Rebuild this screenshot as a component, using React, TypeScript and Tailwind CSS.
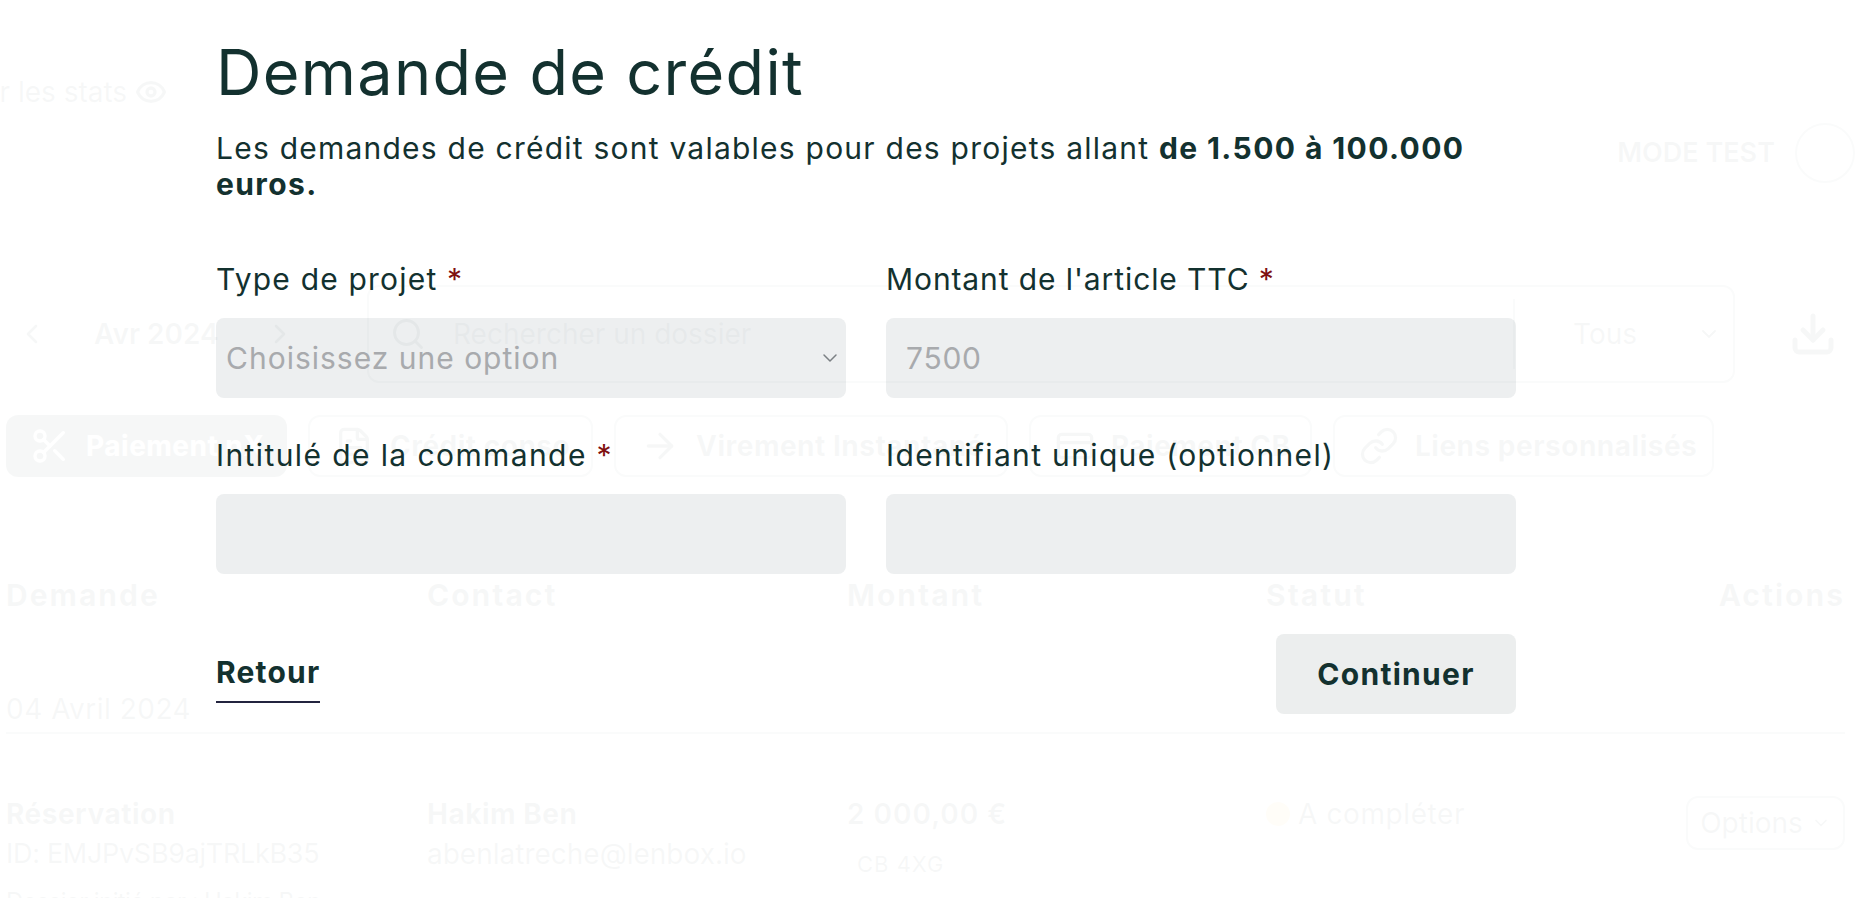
import React from 'react';
import { ArrowRight, ChevronDown, ChevronLeft, ChevronRight, CreditCard, Download, Eye, FileText, Link, Scissors, Search } from 'lucide-react';

const font = { fontFamily: '"Inter", "Liberation Sans", sans-serif' };

const tabs = [
  { label: 'Paiement nX', icon: Scissors, width: 'w-[281px]', active: true },
  { label: 'Crédit conso', icon: FileText, width: 'w-[285px]', active: false },
  { label: 'Virement Instantané', icon: ArrowRight, width: 'w-[394px]', active: false },
  { label: 'Paiement CB', icon: CreditCard, width: 'w-[283px]', active: false },
  { label: 'Liens personnalisés', icon: Link, width: 'w-[381px]', active: false },
];

const Required = () => <span className="text-[#7f1010]"> *</span>;

const Backdrop: React.FC = () => (
  <div className="w-[1872px] h-[898px] overflow-hidden pl-[6px] pr-[27px] text-[#13312f] text-[28px] leading-[40px]">
    <div className="flex justify-between h-[285px] pt-[72px]">
      <div className="flex items-center gap-2 h-[40px] -ml-[48px]">
        <span>Voir les stats</span>
        <Eye className="w-8 h-8" strokeWidth={2.5} />
      </div>
      <div className="flex items-center gap-5 h-[60px] mt-[51px] -mr-[10px]">
        <span className="font-semibold text-[27px]">MODE TEST</span>
        <div className="w-[60px] h-[60px] rounded-full border-2 border-[#13312f]/60" />
      </div>
    </div>

    <div className="flex items-center h-[98px]">
      <ChevronLeft className="w-8 h-8 ml-[10px]" />
      <span className="ml-[46px] w-[176px] font-semibold whitespace-nowrap">Avr 2024</span>
      <ChevronRight className="w-8 h-8 -ml-[6px]" />
      <div className="ml-[71px] w-[1368px] h-[98px] flex items-center border-2 border-[#13312f]/60 rounded-xl">
        <Search className="w-9 h-9 ml-[21px]" />
        <span className="ml-[27px] w-[1060px] text-[#4b5563] whitespace-nowrap">Rechercher un dossier</span>
        <div className="h-[70px] border-l-2 border-[#13312f]/60 flex items-center flex-1 pl-[58px] gap-[60px]">
          <span>Tous</span>
          <ChevronDown className="w-6 h-6" />
        </div>
      </div>
      <Download className="w-12 h-12 ml-[54px]" strokeWidth={2.5} />
    </div>

    <div className="flex gap-[21px] mt-[32px]">
      {tabs.map(t => (
        <div key={t.label} className={`${t.width} h-[62px] rounded-xl flex items-center gap-4 pl-[24px] font-bold tracking-[0.5px] ${t.active ? 'bg-[#13312f] text-white' : 'border-2 border-[#13312f]/60'}`}>
          <t.icon className="w-10 h-10 shrink-0" />
          <span className="whitespace-nowrap">{t.label}</span>
        </div>
      ))}
    </div>

    <div className="grid grid-cols-[421px_420px_419px_1fr] font-bold text-[30px] tracking-[2px] mt-[98px] h-[40px] items-center">
      <span>Demande</span>
      <span>Contact</span>
      <span>Montant</span>
      <div className="flex justify-between"><span>Statut</span><span>Actions</span></div>
    </div>

    <div className="mt-[74px] h-[45px] border-b-2 border-[#13312f]/60 tracking-[0.5px]">04 Avril 2024</div>

    <div className="grid grid-cols-[421px_420px_419px_1fr] mt-[60px]">
      <div className="flex flex-col">
        <span className="font-bold tracking-[0.5px]">Réservation</span>
        <span className="text-[27px] tracking-[-0.3px]">ID: EMJPvSB9ajTRLkB35</span>
        <span className="text-[24px] tracking-[-0.6px] mt-[8px] whitespace-nowrap">Dossier initié par : Hakim Ben</span>
      </div>
      <div className="flex flex-col">
        <span className="font-bold tracking-[0.5px]">Hakim Ben</span>
        <span>abenlatreche@lenbox.io</span>
      </div>
      <div className="flex flex-col">
        <span className="font-semibold tracking-[1px]">2 000,00 €</span>
        <span className="text-[22px] tracking-[1px] ml-[10px] mt-[10px]">CB 4XG</span>
      </div>
      <div className="flex justify-between">
        <div className="flex items-center gap-2 h-[40px] tracking-[0.6px]">
          <span className="w-6 h-6 rounded-full bg-[#f5b83d]" />
          <span>A compléter</span>
        </div>
        <div className="w-[159px] h-[54px] rounded-xl border-2 border-[#13312f]/60 flex items-center justify-center gap-2 mt-[2px]">
          <span>Options</span>
          <ChevronDown className="w-5 h-5" />
        </div>
      </div>
    </div>
  </div>
);

const App: React.FC = () => {
  return (
    <div className="relative w-[1872px] h-[898px] overflow-hidden bg-white" style={font}>
      <Backdrop />

      <div className="absolute inset-0 bg-white/[0.965] pl-[216px] text-[#13312f]">
        <div className="w-[1300px]">
          <h1 className="text-[63px] leading-[72px] pt-[36px] font-normal tracking-[1.3px]">Demande de crédit</h1>
          <p className="text-[30px] leading-[36px] mt-[22px] w-[1290px] tracking-[1.23px]">
            Les demandes de crédit sont valables pour des projets allant <strong className="font-bold tracking-[1.4px]">de 1.500 à 100.000 euros.</strong>
          </p>

          <div className="grid grid-cols-2 gap-x-[40px] gap-y-[31px] mt-[59px]">
            <label className="block">
              <div className="text-[30px] leading-[36px] h-[57px] tracking-[1.2px]">Type de projet<Required /></div>
              <div className="h-[80px] rounded-lg bg-[#1d2d3d]/[0.08] flex items-center justify-between pl-[10px] pr-[4px] text-[30px] text-[#a8aaad] tracking-[1px]">
                <span>Choisissez une option</span>
                <ChevronDown className="w-6 h-6 text-[#7b8084]" strokeWidth={1.5} />
              </div>
            </label>
            <label className="block">
              <div className="text-[30px] leading-[36px] h-[57px] tracking-[0.9px]">Montant de l'article TTC<Required /></div>
              <div className="h-[80px] rounded-lg bg-[#1d2d3d]/[0.08] flex items-center pl-[20px] text-[30px] text-[#a8aaad] tracking-[0.75px]">7500</div>
            </label>
            <label className="block">
              <div className="text-[30px] leading-[36px] h-[57px] mt-[8px] tracking-[1.4px]">Intitulé de la commande<Required /></div>
              <div className="h-[80px] rounded-lg bg-[#1d2d3d]/[0.08]" />
            </label>
            <label className="block">
              <div className="text-[30px] leading-[36px] h-[57px] mt-[8px] tracking-[1.35px]">Identifiant unique (optionnel)</div>
              <div className="h-[80px] rounded-lg bg-[#1d2d3d]/[0.08]" />
            </label>
          </div>

          <div className="flex justify-between items-start mt-[60px]">
            <span className="text-[30px] font-bold leading-[77px] border-b-2 border-[#23243f] h-[69px] tracking-[1.2px]">Retour</span>
            <button className="w-[240px] h-[80px] rounded-lg bg-[#eceeee] text-[30px] font-bold tracking-[1.3px]">Continuer</button>
          </div>
        </div>
      </div>
    </div>
  );
};

export default App;
